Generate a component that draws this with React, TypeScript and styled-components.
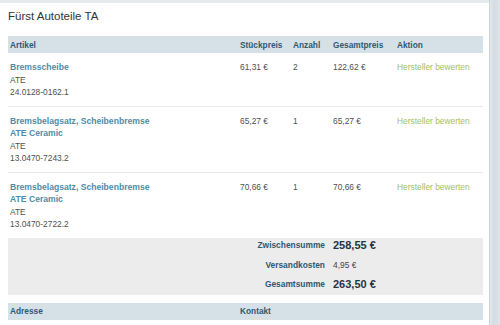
import React from 'react';
import styled, { createGlobalStyle } from 'styled-components';

const GlobalStyle = createGlobalStyle`
  html, body {
    margin: 0;
    padding: 0;
    background: #ffffff;
  }
  body {
    font-family: "Liberation Sans", Arial, sans-serif;
    color: #555;
  }
`;

const Page = styled.div`
  display: flex;
  width: 500px;
  height: 325px;
  overflow: hidden;
  background: #fff;
`;

const Main = styled.div`
  flex: 1;
  display: flex;
  flex-direction: column;
  padding: 0 6px 0 8px;
  border-top: 3px solid #e6eaed;
`;

const SideStrip = styled.div`
  width: 10px;
  border-left: 1px solid #cdd5da;
  background: linear-gradient(90deg, #e2e8ec 0%, #d3dce2 40%, #dfe6ea 100%);
`;

const Title = styled.h1`
  margin: 6px 0 13px;
  font-size: 11.5px;
  line-height: 14px;
  font-weight: normal;
  color: #333;
`;

const cols = '230px 53px 40px 64px 1fr';

const HeadRow = styled.div<{ $spaced?: boolean }>`
  display: grid;
  grid-template-columns: ${cols};
  height: 17px;
  align-items: center;
  background: #d6e1e7;
  margin-top: ${({ $spaced }) => ($spaced ? '8px' : '0')};
`;

const HeadCell = styled.div`
  padding-left: 2px;
  font-size: 8.3px;
  font-weight: bold;
  color: #2e5873;
  white-space: nowrap;
`;

const Row = styled.div<{ $last?: boolean }>`
  display: grid;
  grid-template-columns: ${cols};
  padding: 8px 0 7px;
  border-bottom: ${({ $last }) => ($last ? 'none' : '1px solid #e8e8e8')};
`;

const Cell = styled.div`
  padding-left: 2px;
  font-size: 8.4px;
  line-height: 12.5px;
  color: #4f4f4f;
  white-space: nowrap;
`;

const ItemLine = styled.div<{ $link?: boolean }>`
  font-size: ${({ $link }) => ($link ? '8.6px' : '8.4px')};
  font-weight: ${({ $link }) => ($link ? 'bold' : 'normal')};
  color: ${({ $link }) => ($link ? '#4f8ca8' : '#4f4f4f')};
`;

const RateLink = styled.a`
  color: #a3c063;
  text-decoration: none;
  font-size: 8.4px;
`;

const Summary = styled.div`
  display: grid;
  grid-template-columns: 323px 1fr;
  grid-auto-rows: 15px;
  row-gap: 4.5px;
  align-items: center;
  padding: 0 0 3px;
  background: #ececec;
`;

const SumLabel = styled.div`
  text-align: right;
  padding-right: 6px;
  font-size: 8.4px;
  font-weight: bold;
  color: #2e5873;
`;

const SumValue = styled.div<{ $big?: boolean }>`
  padding-left: 2px;
  font-size: ${({ $big }) => ($big ? '11px' : '8.4px')};
  font-weight: ${({ $big }) => ($big ? 'bold' : 'normal')};
  color: ${({ $big }) => ($big ? '#253443' : '#444')};
`;

type Item = {
  name: string;
  sub?: string;
  brand: string;
  number: string;
  price: string;
  qty: number;
  total: string;
};

const items: Item[] = [
  { name: 'Bremsscheibe', brand: 'ATE', number: '24.0128-0162.1', price: '61,31 €', qty: 2, total: '122,62 €' },
  {
    name: 'Bremsbelagsatz, Scheibenbremse',
    sub: 'ATE Ceramic',
    brand: 'ATE',
    number: '13.0470-7243.2',
    price: '65,27 €',
    qty: 1,
    total: '65,27 €',
  },
  {
    name: 'Bremsbelagsatz, Scheibenbremse',
    sub: 'ATE Ceramic',
    brand: 'ATE',
    number: '13.0470-2722.2',
    price: '70,66 €',
    qty: 1,
    total: '70,66 €',
  },
];

const App: React.FC = () => {
  return (
    <>
      <GlobalStyle />
      <Page>
        <Main>
          <Title>Fürst Autoteile TA</Title>

          <HeadRow>
            <HeadCell>Artikel</HeadCell>
            <HeadCell>Stückpreis</HeadCell>
            <HeadCell>Anzahl</HeadCell>
            <HeadCell>Gesamtpreis</HeadCell>
            <HeadCell>Aktion</HeadCell>
          </HeadRow>

          {items.map((item, i) => (
            <Row key={item.number} $last={i === items.length - 1}>
              <Cell>
                <ItemLine $link>{item.name}</ItemLine>
                {item.sub && <ItemLine $link>{item.sub}</ItemLine>}
                <ItemLine>{item.brand}</ItemLine>
                <ItemLine>{item.number}</ItemLine>
              </Cell>
              <Cell>{item.price}</Cell>
              <Cell>{item.qty}</Cell>
              <Cell>{item.total}</Cell>
              <Cell>
                <RateLink href="#">Hersteller bewerten</RateLink>
              </Cell>
            </Row>
          ))}

          <Summary>
            <SumLabel>Zwischensumme</SumLabel>
            <SumValue $big>258,55 €</SumValue>
            <SumLabel>Versandkosten</SumLabel>
            <SumValue>4,95 €</SumValue>
            <SumLabel>Gesamtsumme</SumLabel>
            <SumValue $big>263,50 €</SumValue>
          </Summary>

          <HeadRow $spaced>
            <HeadCell>Adresse</HeadCell>
            <HeadCell>Kontakt</HeadCell>
          </HeadRow>
        </Main>
        <SideStrip />
      </Page>
    </>
  );
};

export default App;
